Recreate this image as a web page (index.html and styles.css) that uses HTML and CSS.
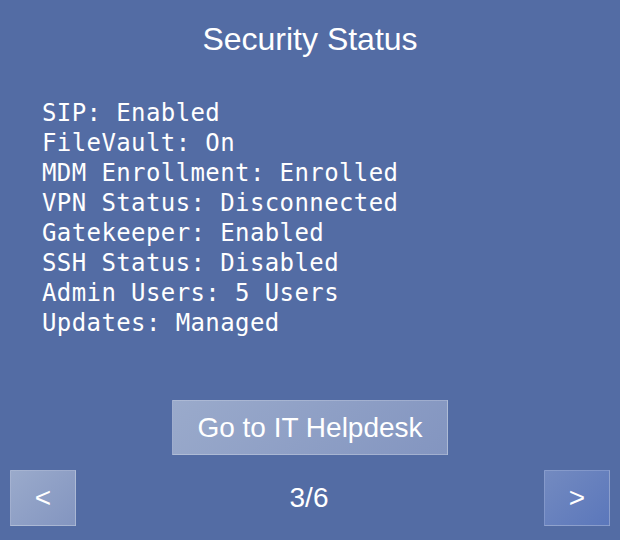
FILE: index.html
```html
<!DOCTYPE html>
<html lang="en">
<head>
<meta charset="utf-8">
<title>Security Status</title>
<link rel="stylesheet" href="styles.css">
</head>
<body>
<div class="screen">
  <h1 class="title">Security Status</h1>
  <ul class="status-list">
    <li>SIP: Enabled</li>
    <li>FileVault: On</li>
    <li>MDM Enrollment: Enrolled</li>
    <li>VPN Status: Disconnected</li>
    <li>Gatekeeper: Enabled</li>
    <li>SSH Status: Disabled</li>
    <li>Admin Users: 5 Users</li>
    <li>Updates: Managed</li>
  </ul>
  <div class="action">
    <button class="btn helpdesk">Go to IT Helpdesk</button>
  </div>
  <div class="nav">
    <button class="btn nav-btn prev">&lt;</button>
    <span class="page">3/6</span>
    <button class="btn nav-btn next">&gt;</button>
  </div>
</div>
</body>
</html>
```

FILE: styles.css
```css
html, body {
  margin: 0;
  padding: 0;
}
body {
  background: #536ca4;
  color: #ffffff;
  font-family: "Liberation Sans", Arial, Helvetica, sans-serif;
}
.screen {
  width: 620px;
  height: 540px;
  display: flex;
  flex-direction: column;
  box-sizing: border-box;
}
.title {
  margin: 19px 0 0;
  font-size: 32px;
  font-weight: normal;
  line-height: 40px;
  text-align: center;
}
.status-list {
  list-style: none;
  margin: 39px 0 0;
  padding: 0 0 0 42px;
  font-family: "DejaVu Sans Mono", Menlo, monospace;
  font-size: 24px;
  letter-spacing: 0.4px;
  line-height: 30px;
}
.action {
  display: flex;
  justify-content: center;
  margin-top: 62px;
}
.btn {
  font-family: "Liberation Sans", Arial, Helvetica, sans-serif;
  color: #ffffff;
  font-size: 28px;
  border: 1px solid rgba(255, 255, 255, 0.22);
  background: linear-gradient(135deg, #9aaacb 0%, #8395c0 100%);
  padding: 0;
  margin: 0;
  cursor: pointer;
}
.helpdesk {
  width: 276px;
  height: 55px;
}
.nav {
  display: flex;
  justify-content: space-between;
  align-items: center;
  padding: 0 10px;
  margin-top: 15px;
}
.nav-btn {
  width: 66px;
  height: 56px;
}
.next {
  background: linear-gradient(135deg, #738ac0 0%, #5b77bb 100%);
}
.page {
  font-size: 28px;
  margin-left: -2px;
}
```
